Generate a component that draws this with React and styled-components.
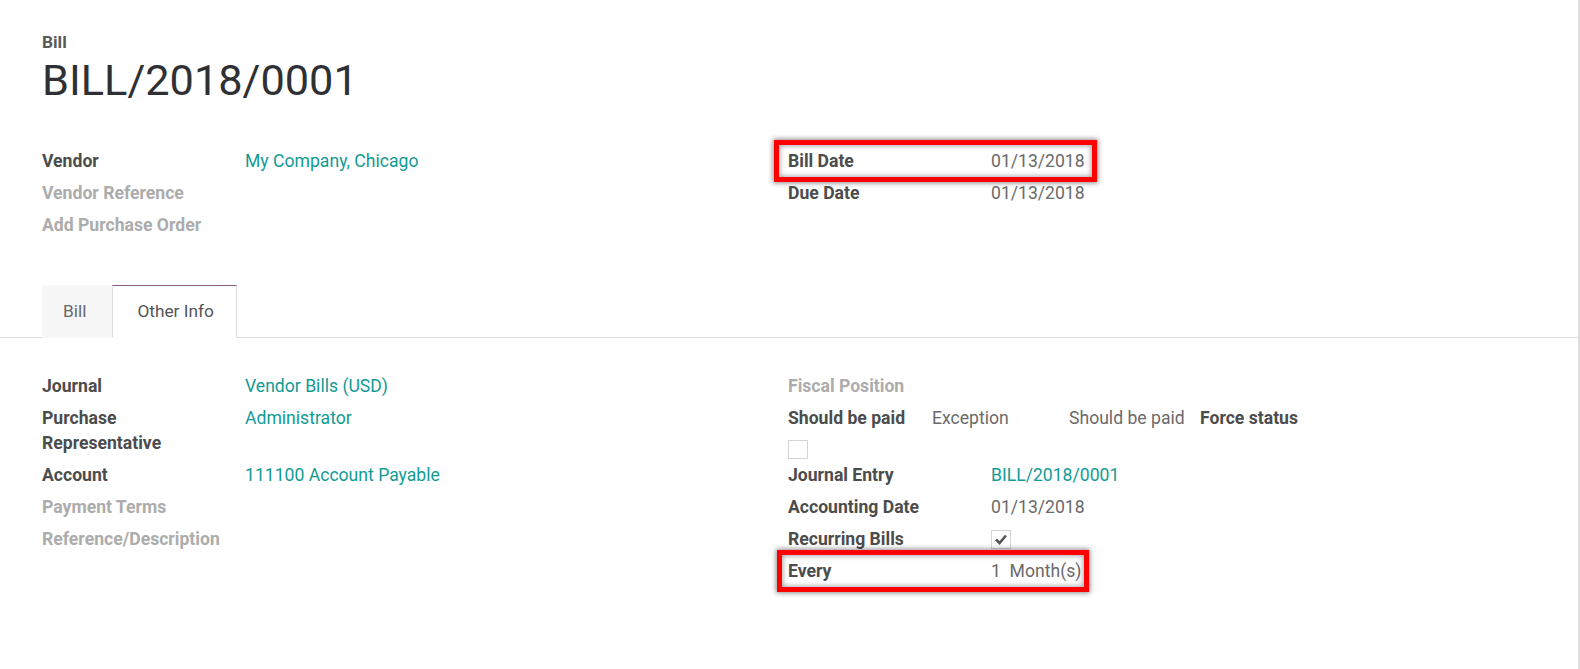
import React from 'react';
import styled, { createGlobalStyle } from 'styled-components';

const GlobalStyle = createGlobalStyle`
  html, body {
    margin: 0;
    padding: 0;
    background: #fff;
  }
  body {
    font-family: Roboto, "Liberation Sans", Arial, sans-serif;
    font-size: 17.6px;
    line-height: 24.7px;
    color: #4c4c4c;
  }
`;

const Sheet = styled.div`
  min-height: 100vh;
  box-sizing: border-box;
  border-right: 2px solid #dedede;
`;

const Header = styled.div`
  padding: 30px 42px 0;
`;

const Caption = styled.div`
  font-weight: 700;
  font-size: 17.3px;
  color: #5a5a5a;
`;

const Title = styled.h1`
  margin: 0;
  font-size: 43.3px;
  line-height: 52.8px;
  font-weight: 400;
  color: #2f3034;
`;

const Groups = styled.div`
  display: grid;
  grid-template-columns: 746px 1fr;
  padding: ${p => p.$top}px 42px 0;
`;

const Group = styled.div`
  display: flex;
  flex-direction: column;
`;

const Row = styled.div`
  position: relative;
  display: grid;
  grid-template-columns: 203px 1fr;
  align-items: start;
  padding: 3.65px 0;
`;

const Label = styled.div`
  font-weight: 700;
  padding-right: 16px;
  color: ${p => (p.$empty ? '#acacac' : '#4c4c4c')};
`;

const Value = styled.div`
  color: ${p => (p.$link ? '#129b95' : '#6a6a6a')};
  min-height: 24.7px;
  display: flex;
  align-items: center;
`;

const Highlight = styled.div`
  position: absolute;
  top: -5px;
  left: ${p => p.$left}px;
  width: ${p => p.$width}px;
  height: 42px;
  box-sizing: border-box;
  border: 5px solid #ff0000;
  box-shadow: 0 0 5px 1px rgba(0, 0, 0, 0.45), inset 0 0 5px 1px rgba(0, 0, 0, 0.35);
  pointer-events: none;
`;

const TabBar = styled.div`
  display: flex;
  margin-top: 44px;
  padding-left: 42px;
  border-bottom: 1px solid #dcdcdc;
`;

const Tab = styled.div`
  padding: 13px ${p => (p.$active ? 22 : 25)}px 13px ${p => (p.$active ? 24 : 20)}px;
  margin-bottom: -1px;
  font-size: 17.3px;
  border: 1px solid ${p => (p.$active ? '#dcdcdc' : 'transparent')};
  border-top-color: ${p => (p.$active ? '#875a7b' : 'transparent')};
  border-bottom-color: ${p => (p.$active ? '#fff' : 'transparent')};
  background: ${p => (p.$active ? '#fff' : '#f7f7f7')};
  color: ${p => (p.$active ? '#555' : '#666')};
`;

const WideRow = styled.div`
  padding: 3.65px 0 0;
`;

const Cells = styled.div`
  display: flex;
`;

const Cell = styled.div`
  width: ${p => (p.$w ? `${p.$w}px` : 'auto')};
  font-weight: ${p => (p.$bold ? 700 : 400)};
  color: ${p => (p.$bold ? '#4c4c4c' : '#6a6a6a')};
  white-space: nowrap;
`;

const Box = styled.span`
  display: flex;
  align-items: center;
  justify-content: center;
  width: 20px;
  height: 19px;
  box-sizing: border-box;
  border: 1px solid #d4d4d4;
  margin-top: ${p => p.$mt || 0}px;
  background: #fff;
`;

const Check = ({ checked, mt }) => (
  <Box $mt={mt}>
    {checked && (
      <svg width="14" height="12" viewBox="0 0 14 12">
        <path d="M2 6.5 L5.5 10 L12 2.5" fill="none" stroke="#555" strokeWidth="2.6" />
      </svg>
    )}
  </Box>
);

const Field = ({ label, empty, link, children, mark }) => (
  <Row>
    <Label $empty={empty}>{label}</Label>
    <Value $link={link}>{children}</Value>
    {mark && <Highlight $left={mark.left} $width={mark.width} />}
  </Row>
);

export default function App() {
  return (
    <Sheet>
      <GlobalStyle />
      <Header>
        <Caption>Bill</Caption>
        <Title>BILL/2018/0001</Title>
      </Header>

      <Groups $top={37.7}>
        <Group>
          <Field label="Vendor" link>My Company, Chicago</Field>
          <Field label="Vendor Reference" empty />
          <Field label="Add Purchase Order" empty />
        </Group>
        <Group>
          <Field label="Bill Date" mark={{ left: -14, width: 323 }}>01/13/2018</Field>
          <Field label="Due Date">01/13/2018</Field>
        </Group>
      </Groups>

      <TabBar>
        <Tab>Bill</Tab>
        <Tab $active>Other Info</Tab>
      </TabBar>

      <Groups $top={33}>
        <Group>
          <Field label="Journal" link>Vendor Bills (USD)</Field>
          <Field label="Purchase Representative" link>Administrator</Field>
          <Field label="Account" link>111100 Account Payable</Field>
          <Field label="Payment Terms" empty />
          <Field label="Reference/Description" empty />
        </Group>
        <Group>
          <Field label="Fiscal Position" empty />
          <WideRow>
            <Cells>
              <Cell $w={144} $bold>Should be paid</Cell>
              <Cell $w={137}>Exception</Cell>
              <Cell $w={131}>Should be paid</Cell>
              <Cell $bold>Force status</Cell>
            </Cells>
            <Check mt={9} />
          </WideRow>
          <Field label="Journal Entry" link>BILL/2018/0001</Field>
          <Field label="Accounting Date">01/13/2018</Field>
          <Field label="Recurring Bills"><Check checked /></Field>
          <Field label="Every" mark={{ left: -11, width: 312 }}>1&nbsp;&nbsp;Month(s)</Field>
        </Group>
      </Groups>
    </Sheet>
  );
}
